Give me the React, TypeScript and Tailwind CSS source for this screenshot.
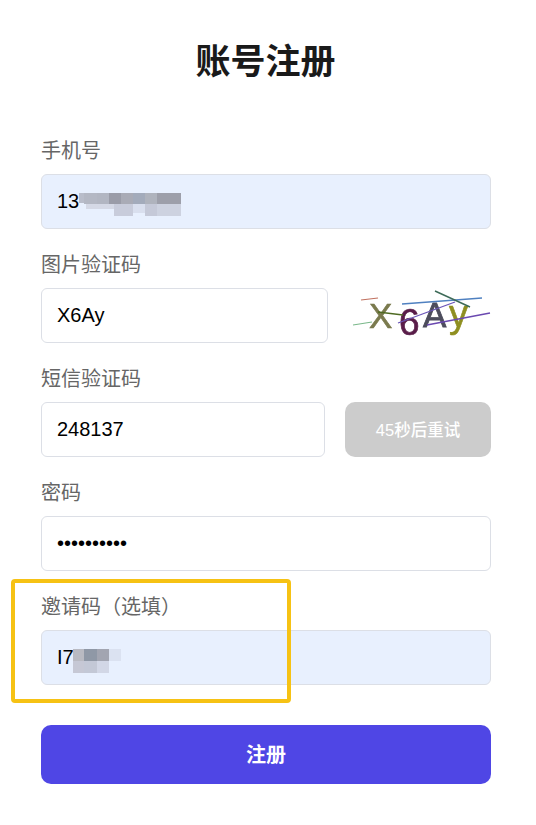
const sans = "font-['Liberation_Sans','Noto_Sans_CJK_SC',sans-serif]";

function Mosaic({ cells, w, h }: { cells: [number, number, number, number, string][]; w: number; h: number }) {
  return (
    <svg width={w} height={h} viewBox={`0 0 ${w} ${h}`} className="absolute left-0 top-0 pointer-events-none">
      <defs>
        <filter id="mb" x="-5%" y="-5%" width="110%" height="110%"><feGaussianBlur stdDeviation="0.7" /></filter>
      </defs>
      <g filter="url(#mb)">
        {cells.map(([x, y, cw, ch, c], i) => (
          <rect key={i} x={x} y={y} width={cw} height={ch} fill={c} />
        ))}
      </g>
    </svg>
  );
}

function Box({ children, className = "" }: { children: React.ReactNode; className?: string }) {
  return (
    <div className={`relative flex items-center h-[55px] rounded-[6px] border border-[#dcdfe6] px-[15px] pb-[2px] text-[20px] text-black ${className}`}>
      {children}
    </div>
  );
}

function Label({ children }: { children: React.ReactNode }) {
  return <div className="h-[24px] mb-[11px] flex items-center text-[20px] leading-[24px] text-[#666666]">{children}</div>;
}

const phoneCells: [number, number, number, number, string][] = [
  [37, 18, 5, 10, "#b9bdca"], [42, 18, 13, 11, "#b4b8c4"], [55, 18, 12, 11, "#b2b6c2"], [67, 18, 12, 11, "#9a9ca8"], [79, 18, 12, 11, "#a9abb6"],
  [91, 18, 12, 11, "#a3abbb"], [103, 18, 12, 11, "#afb3bd"], [115, 18, 24, 11, "#9d9faa"],
  [44, 29, 28, 5, "#d5d9e6"], [72, 29, 19, 12, "#c8ccdb"], [91, 29, 12, 9, "#d9dfee"], [103, 29, 12, 12, "#c5c9d8"], [115, 29, 24, 12, "#cdd2e0"],
];

const inviteCells: [number, number, number, number, string][] = [
  [31, 18, 11, 12, "#b9bac2"], [42, 18, 13, 12, "#8f98a6"], [55, 18, 12, 12, "#a2a5b1"], [67, 18, 12, 12, "#dbe2f1"],
  [31, 30, 11, 12, "#c6c8d5"], [42, 30, 13, 12, "#c3c8d6"], [55, 30, 12, 12, "#d2d7e6"],
];

export default function App() {
  return (
    <div className={`relative w-[536px] h-[825px] bg-white overflow-hidden ${sans}`}>
      <h1 className="pt-[39px] pr-[5px] h-[139px] text-center text-[35px] leading-[46px] font-bold text-[#1a1a1a]">账号注册</h1>
      <div className="mx-[41px] w-[450px]">
        <Label>手机号</Label>
        <Box className="bg-[#e8f0fe] mb-[24px]">
          <span>13</span>
          <Mosaic w={450} h={55} cells={phoneCells} />
        </Box>

        <Label>图片验证码</Label>
        <div className="flex items-center mb-[24px]">
          <Box className="w-[287px] bg-white">X6Ay</Box>
          <svg width="140" height="55" viewBox="0 0 140 55" className="ml-[23px] shrink-0 font-['Liberation_Sans']">
            <defs>
              <filter id="cb"><feGaussianBlur stdDeviation="0.35" /></filter>
            </defs>
            <g filter="url(#cb)">
              <text x="18" y="40" fill="#7a7a4e" fontSize="35" stroke="#7a7a4e" strokeWidth="0.6">X</text>
              <text x="48" y="47" fill="#5a1f4a" fontSize="37" stroke="#5a1f4a" strokeWidth="0.7">6</text>
              <text x="72" y="39" fill="#4d4d5c" fontSize="35" stroke="#4d4d5c" strokeWidth="0.8">A</text>
              <text x="98" y="39" fill="#8f8f20" fontSize="38" stroke="#8f8f20" strokeWidth="0.6">y</text>
              <path d="M10 12 L27 10" stroke="#c0705f" strokeWidth="1.2" fill="none" />
              <path d="M2 37 L21 34" stroke="#7ab88a" strokeWidth="1.2" fill="none" />
              <path d="M27 24 L52 27" stroke="#4f6b22" strokeWidth="1.4" fill="none" />
              <path d="M51 16 L131 10" stroke="#4f80c0" strokeWidth="1.4" fill="none" />
              <path d="M84 3 L119 19" stroke="#3d6b58" strokeWidth="1.4" fill="none" />
              <path d="M47 35 L104 14" stroke="#6a55b8" strokeWidth="1.3" fill="none" />
              <path d="M76 37 L139 25" stroke="#6a48b0" strokeWidth="1.3" fill="none" />
            </g>
          </svg>
        </div>

        <Label>短信验证码</Label>
        <div className="flex items-center justify-between mb-[24px]">
          <Box className="w-[284px] bg-white">248137</Box>
          <button className="w-[146px] h-[55px] pt-[2px] rounded-[10px] bg-[#cccccc] text-white text-[16.5px] font-medium">45秒后重试</button>
        </div>

        <Label>密码</Label>
        <Box className="bg-white mb-[24px]">••••••••••</Box>

        <Label>邀请码（选填）</Label>
        <Box className="bg-[#e8f0fe]">
          <span>I7</span>
          <Mosaic w={450} h={55} cells={inviteCells} />
        </Box>

        <button className="mt-[40px] w-full h-[59px] rounded-[10px] bg-[#4f46e5] text-white text-[20px] font-bold">注册</button>
      </div>

      <div className="absolute left-[11px] top-[579px] w-[280px] h-[124px] rounded-[4px] border-4 border-[#f6c214] pointer-events-none" />
    </div>
  );
}
